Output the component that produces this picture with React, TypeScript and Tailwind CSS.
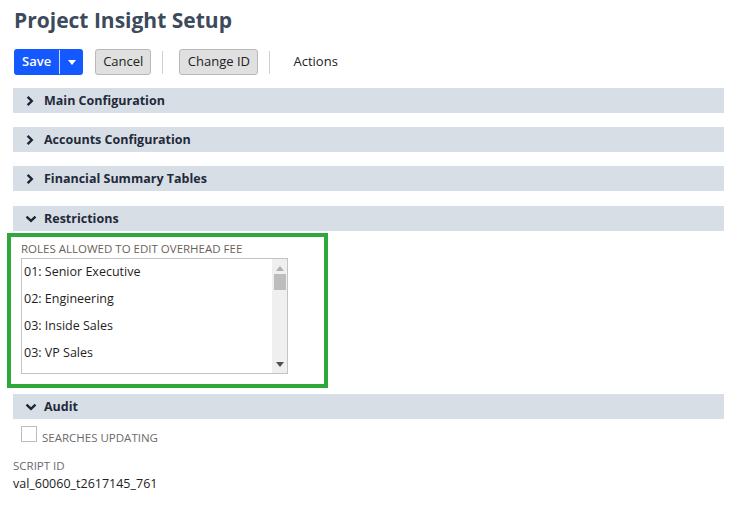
import React from 'react';

const font = { fontFamily: '"Open Sans", "Liberation Sans", sans-serif' };

const ChevronRight = () => (
  <svg width="10" height="12" viewBox="0 0 10 12" className="shrink-0">
    <path d="M2.6 1.8 L6.8 6 L2.6 10.2" fill="none" stroke="#1b2535" strokeWidth="2.4" />
  </svg>
);

const ChevronDown = () => (
  <svg width="12" height="10" viewBox="0 0 12 10" className="shrink-0">
    <path d="M1.5 2.6 L6 6.8 L10.5 2.6" fill="none" stroke="#1b2535" strokeWidth="2.4" />
  </svg>
);

const SectionHeader: React.FC<{ title: string; open?: boolean; className?: string }> = ({ title, open, className }) => (
  <div className={`h-[25px] bg-[#d8dee6] flex items-center pl-[12px] pt-px ${className || ''}`}>
    <div className="w-[18px] flex justify-start">{open ? <ChevronDown /> : <ChevronRight />}</div>
    <span className="text-[12.5px] font-bold text-[#1f2a3a] ml-[1px]">{title}</span>
  </div>
);

const roles = ['01: Senior Executive', '02: Engineering', '03: Inside Sales', '03: VP Sales'];

export default function App() {
  return (
    <div className="bg-white min-h-screen pl-[13px] pr-[17px] pt-[5px]" style={font}>
      <h1 className="text-[21px] leading-[30px] font-bold text-[#3c4a5c] pl-[1px]">Project Insight Setup</h1>

      <div className="flex items-center mt-[14px] h-[26px] pl-[1px]">
        <div className="flex h-[26px] rounded-[3px] bg-[#1459ff] text-white text-[13px] overflow-hidden">
          <button className="px-[8px] font-semibold">Save</button>
          <div className="w-px bg-white/80 my-[1px]" />
          <button className="w-[23px] flex items-center justify-center">
            <svg width="8" height="5" viewBox="0 0 8 5"><path d="M0 0 L8 0 L4 5 Z" fill="white" /></svg>
          </button>
        </div>
        <button className="ml-[12px] h-[26px] px-[7px] rounded-[3px] bg-[#e0e0e0] border border-[#b9b9b9] text-[13px] text-[#222]">Cancel</button>
        <div className="ml-[11px] w-px h-[23px] bg-[#d0d0d0]" />
        <button className="ml-[16px] h-[26px] px-[7.5px] rounded-[3px] bg-[#e0e0e0] border border-[#b9b9b9] text-[13px] text-[#222]">Change ID</button>
        <div className="ml-[11px] w-px h-[23px] bg-[#d0d0d0]" />
        <span className="ml-[23px] text-[13px] text-[#222]">Actions</span>
      </div>

      <SectionHeader className="mt-[13px]" title="Main Configuration" />
      <SectionHeader className="mt-[14px]" title="Accounts Configuration" />
      <SectionHeader className="mt-[14px]" title="Financial Summary Tables" />
      <SectionHeader className="mt-[15px]" title="Restrictions" open />

      <div className="ml-[-6px] mt-[2px] w-[321px] border-[4px] border-[#2ea83a] pl-[10px] pt-[4px] pb-[10px]">
        <div className="text-[11.5px] leading-[15px] text-[#6b5f5a] uppercase">Roles allowed to edit overhead fee</div>
        <div className="mt-[2px] w-[267px] h-[116px] border border-[#c4c4c4] flex">
          <div className="flex-1 pl-[2px]">
            {roles.map((r) => (
              <div key={r} className="h-[27px] flex items-center text-[12.5px] text-[#1e1e1e]">{r}</div>
            ))}
          </div>
          <div className="w-[15px] bg-[#efefef] flex flex-col items-center">
            <svg width="8" height="5" viewBox="0 0 8 5" className="mt-[7px]"><path d="M0 5 L8 5 L4 0 Z" fill="#b0b0b0" /></svg>
            <div className="mt-[3px] w-[12px] h-[16px] bg-[#bdbdbd]" />
            <div className="flex-1" />
            <svg width="8" height="5" viewBox="0 0 8 5" className="mb-[6px]"><path d="M0 0 L8 0 L4 5 Z" fill="#505050" /></svg>
          </div>
        </div>
      </div>

      <SectionHeader className="mt-[6px]" title="Audit" open />

      <div className="flex items-start mt-[7px] pl-[8px]">
        <div className="w-[16px] h-[16px] border border-[#bcbcbc] bg-white" />
        <span className="ml-[5px] mt-[4px] text-[11.5px] leading-[15px] text-[#6b6b6b] uppercase">Searches updating</span>
      </div>

      <div className="mt-[13px] text-[11.5px] leading-[15px] text-[#6b6b6b] uppercase">Script ID</div>
      <div className="mt-[3px] text-[12.5px] leading-[16px] text-[#222]">val_60060_t2617145_761</div>
    </div>
  );
}
